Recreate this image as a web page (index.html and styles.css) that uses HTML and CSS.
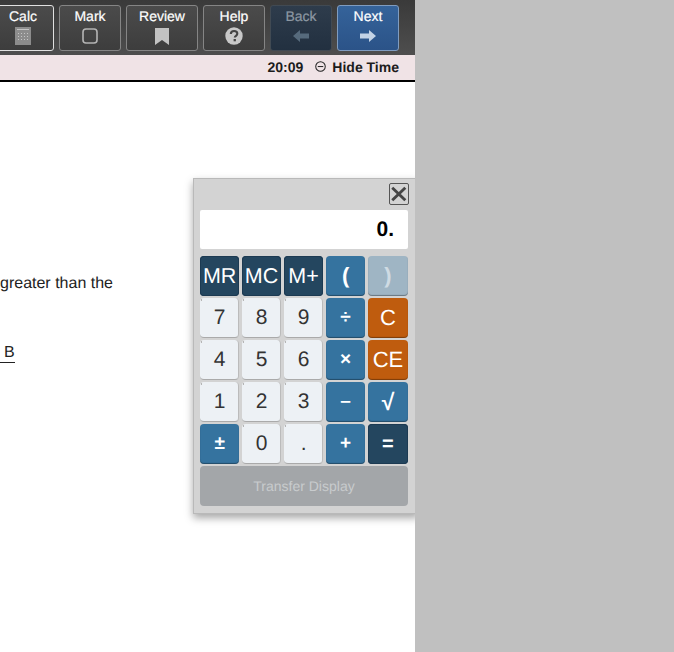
FILE: index.html
```html
<!DOCTYPE html>
<html lang="en">
<head>
<meta charset="utf-8">
<title>Calculator</title>
<link rel="stylesheet" href="styles.css">
</head>
<body>
<div class="page">
  <main class="main">
    <header class="toolbar">
      <button class="tool tool-active"><span>Calc</span>
        <svg class="ico" viewBox="0 0 16 18" width="16" height="18"><rect width="16" height="18" fill="#8c8c8c"/><g fill="#c4c4c4"><rect x="2" y="2" width="12" height="1"/><rect x="3" y="6" width="1" height="1"/><rect x="6" y="6" width="1" height="1"/><rect x="9" y="6" width="1" height="1"/><rect x="12" y="6" width="1" height="1"/><rect x="3" y="9" width="1" height="1"/><rect x="6" y="9" width="1" height="1"/><rect x="9" y="9" width="1" height="1"/><rect x="12" y="9" width="1" height="1"/><rect x="3" y="12" width="1" height="1"/><rect x="6" y="12" width="1" height="1"/><rect x="9" y="12" width="1" height="1"/><rect x="12" y="12" width="1" height="1"/></g></svg>
      </button>
      <button class="tool"><span>Mark</span>
        <svg class="ico" viewBox="0 0 16 18" width="16" height="18"><rect x="1" y="2" width="14" height="14" rx="3" fill="none" stroke="#b4b4b4" stroke-width="1.6"/></svg>
      </button>
      <button class="tool tool-wide"><span>Review</span>
        <svg class="ico" viewBox="0 0 16 18" width="16" height="18"><path d="M1 1H15V18L8 13L1 18Z" fill="#c2c2c2"/></svg>
      </button>
      <button class="tool"><span>Help</span>
        <svg class="ico" viewBox="0 0 18 18" width="18" height="18"><circle cx="9" cy="9" r="8.7" fill="#c8c8c8"/><path d="M5.8 7C5.9 5 7.3 4 9.1 4C11 4 12.3 5.1 12.3 6.7C12.3 8.9 9.8 8.7 9.8 10.6" fill="none" stroke="#444" stroke-width="2.1"/><rect x="8.6" y="12" width="2.3" height="2.3" fill="#444"/></svg>
      </button>
      <button class="tool tool-back"><span>Back</span>
        <svg class="ico" viewBox="0 0 16 18" width="16" height="18"><path d="M0 9L7 3V6.5H16V11.5H7V15Z" fill="#566a7c"/></svg>
      </button>
      <button class="tool tool-next"><span>Next</span>
        <svg class="ico" viewBox="0 0 16 18" width="16" height="18"><path d="M16 9L9 3V6.5H0V11.5H9V15Z" fill="#c3d3e6"/></svg>
      </button>
    </header>
    <div class="timebar">
      <span class="time">20:09</span>
      <span class="hide"><svg class="minus" viewBox="0 0 12 12" width="11" height="11"><circle cx="6" cy="6" r="5.2" fill="none" stroke="#222" stroke-width="1.1"/><rect x="3" y="5.5" width="6" height="1.1" fill="#222"/></svg>Hide Time</span>
    </div>
    <section class="content">
      <p class="line">greater than the</p>
      <p class="label">B</p>
    </section>
    <div class="calc">
      <div class="calc-top">
        <button class="close" aria-label="Close"><svg viewBox="0 0 20 20" width="20" height="20"><path d="M2.5 3L17 17M17 3L2.5 17" stroke="#444" stroke-width="3.2"/></svg></button>
      </div>
      <div class="display">0.</div>
      <div class="keys">
        <button class="key dark">MR</button>
        <button class="key dark">MC</button>
        <button class="key dark">M+</button>
        <button class="key blue paren">(</button>
        <button class="key off paren">)</button>
        <button class="key num">7</button>
        <button class="key num">8</button>
        <button class="key num">9</button>
        <button class="key blue">÷</button>
        <button class="key orange">C</button>
        <button class="key num">4</button>
        <button class="key num">5</button>
        <button class="key num">6</button>
        <button class="key blue">×</button>
        <button class="key orange">CE</button>
        <button class="key num">1</button>
        <button class="key num">2</button>
        <button class="key num">3</button>
        <button class="key blue">–</button>
        <button class="key blue root">√</button>
        <button class="key blue">±</button>
        <button class="key num">0</button>
        <button class="key num">.</button>
        <button class="key blue">+</button>
        <button class="key dark eq">=</button>
        <button class="transfer">Transfer Display</button>
      </div>
    </div>
  </main>
  <aside class="side"></aside>
</div>
</body>
</html>
```
FILE: styles.css
```css
* { box-sizing: border-box; }
html, body { margin: 0; height: 100%; }
body { font-family: "Liberation Sans", Arial, sans-serif; overflow: hidden; text-rendering: geometricPrecision; }
button { font-family: inherit; margin: 0; padding: 0; cursor: pointer; text-rendering: geometricPrecision; }
.page { display: flex; width: 674px; height: 652px; }
.main { position: relative; width: 415px; height: 652px; background: #fff; overflow: hidden; }
.side { flex: 1; background: #c0c0c0; }

.toolbar { display: flex; justify-content: flex-end; gap: 5px; height: 55px; padding: 5px 16px 0 0; background: linear-gradient(#3a3a3a, #4e4e4e); }
.tool { flex: 0 0 62px; height: 46px; display: flex; flex-direction: column; align-items: center; gap: 3px; padding-top: 2px; color: #fff; font-size: 14px; line-height: 16px; border: 1px solid #858585; border-radius: 3px; background: linear-gradient(#4b4b4b, #3d3d3d); -webkit-text-stroke: 0.2px currentColor; }
.tool-wide { flex-basis: 72px; }
.tool-active { border-color: #e0e0e0; }
.tool-back { color: #8d98a3; border-color: #414a53; background: linear-gradient(#2e3c4c, #223040); }
.tool-next { border-color: #7f9cc0; background: linear-gradient(#35639a, #2b5388); }
.ico { display: block; flex: none; }

.timebar { display: flex; justify-content: flex-end; align-items: center; gap: 12px; height: 27px; padding: 0 16px 2px 0; background: #f0e3e6; border-bottom: 2px solid #000; color: #1c1c1c; font-size: 14px; font-weight: bold; }
.hide { display: flex; align-items: center; gap: 6px; }
.minus { display: block; }

.content { font-size: 16px; color: #222; }
.line { margin: 0; padding-top: 193px; line-height: 18px; }
.label { margin: 51px 0 0; padding: 0 0 0 4px; width: 15px; line-height: 18px; border-bottom: 1px solid #222; }

.calc { position: absolute; left: 193px; top: 178px; width: 226px; height: 336px; padding: 0 10px 0 6px; background: #d3d3d3; border: 1px solid #b9b9b9; box-shadow: 0 4px 8px rgba(0,0,0,.35); }
.calc-top { display: flex; justify-content: flex-end; height: 31px; padding: 4px 0 0; }
.close { width: 20px; height: 22px; margin-right: -1px; padding: 0; display: flex; align-items: center; justify-content: center; background: #d3d3d3; border: 1px solid #555; border-radius: 2px; }
.display { height: 39px; margin-bottom: 7px; padding: 1px 14px 0 0; background: #fff; border-radius: 2px; text-align: right; font-size: 21px; font-weight: bold; line-height: 38px; color: #000; }
.keys { display: grid; grid-template-columns: 39.2px 39.2px 39.2px 39.2px 40px; grid-auto-rows: 40px; gap: 2px 2.8px; width: 208px; }
.key { border: 0; border-radius: 4px; font-size: 21.5px; color: #fff; display: flex; align-items: center; justify-content: center; box-shadow: inset 0 -1px 1px rgba(0,0,0,.35); }
.dark { background: #24465f; box-shadow: inset 0 0 0 1px #1c3a52; }
.blue { background: #35739f; font-weight: bold; font-size: 19px; }
.orange { background: #bf5c0e; font-size: 22px; }
.off { background: #9fb5c4; color: #cfdbe3; font-weight: bold; }
.paren { font-size: 22px; }
.num { padding-left: 1px; color: #333; font-size: 21px; background: linear-gradient(#b5b5b5, #b5b5b5) 1px 1px / 1px 2px no-repeat, #edf1f5; border-right: 1px solid #bbb; border-bottom: 1px solid #aaa; box-shadow: none; }
.eq { font-size: 20px; font-weight: bold; }
.root { font-size: 23px; }
.transfer { grid-column: 1 / -1; border: 0; border-radius: 4px; background: #a3a6a9; color: #c8cbcd; font-size: 14px; }
```
